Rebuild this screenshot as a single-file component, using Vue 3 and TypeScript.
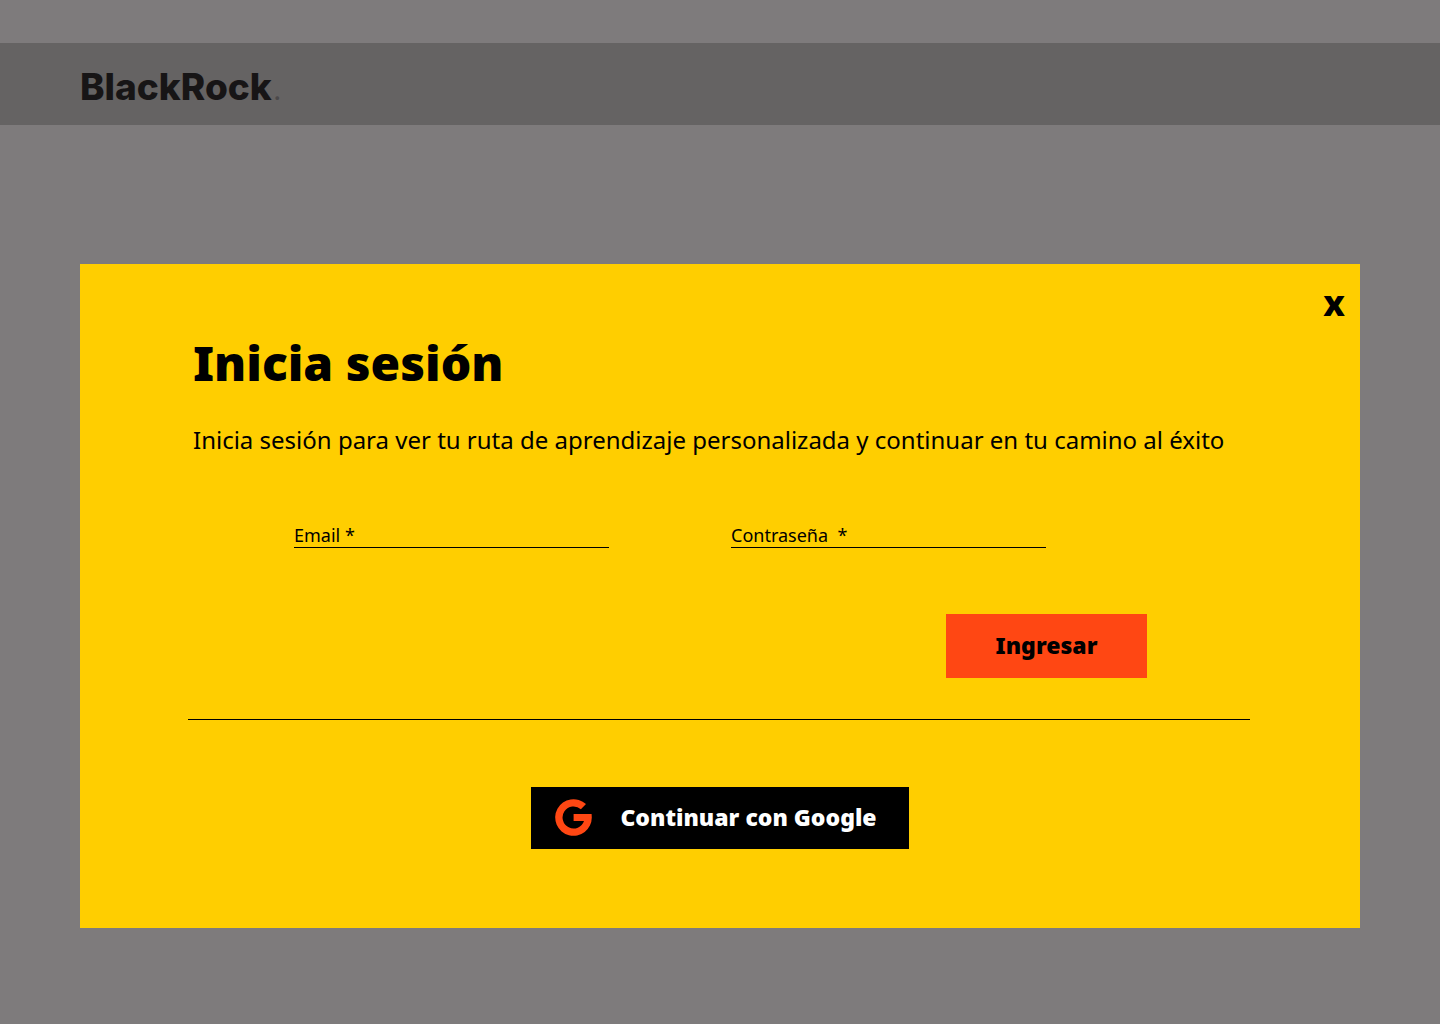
<script setup lang="ts">
import { ref } from 'vue'

const email = ref('')
const password = ref('')
const open = ref(true)
</script>

<template>
  <div class="page">
    <header class="topbar">
      <a class="logo" href="#">BlackRock<span class="mark">.</span></a>
    </header>

    <main v-if="open" class="dialog" role="dialog" aria-labelledby="title">
      <button class="close" type="button" @click="open = false">x</button>
      <div class="content">
        <h1 id="title">Inicia sesión</h1>
        <p class="intro">Inicia sesión para ver tu ruta de aprendizaje personalizada y continuar en tu camino al éxito</p>

        <form @submit.prevent>
          <div class="fields">
            <div class="field">
              <label for="email">Email *</label>
              <input id="email" v-model="email" type="email" />
            </div>
            <div class="field">
              <label for="password">Contraseña&nbsp; *</label>
              <input id="password" v-model="password" type="password" />
            </div>
          </div>
          <div class="actions">
            <button class="submit" type="submit">Ingresar</button>
          </div>
        </form>
      </div>

      <hr />

      <div class="alternatives">
        <button class="google" type="button">
          <svg viewBox="0 0 37 37" width="37" height="37" aria-hidden="true">
            <path
              fill="#ff4713"
              d="M31 5.1A18.3 18.3 0 1 0 36.8 18.5L36.6 15H18.6V22H29A11 11 0 1 1 25.9 10.3Z"
            />
          </svg>
          <span>Continuar con Google</span>
        </button>
      </div>
    </main>
  </div>
</template>

<style>
body {
  background: #7e7b7c;
}
</style>

<style scoped>
.page {
  padding: 43px 0 96px;
  color: #000;
  font-family: 'Noto Sans', sans-serif;
}

.topbar {
  display: flex;
  align-items: center;
  height: 82px;
  padding: 0 80px;
  background: #656363;
}

.logo {
  padding-top: 12px;
  color: #171516;
  font: 800 37px/48px Inter, sans-serif;
  text-decoration: none;
}

.mark {
  padding-left: 2px;
  color: #4b494a;
  font-size: 20px;
}

.dialog {
  display: flex;
  flex-direction: column;
  margin: 139px 80px 0;
  padding: 16px 0 79px;
  background: #ffce00;
}

button {
  padding: 0 0 2px;
  border: 0;
  font-family: inherit;
  font-weight: 900;
  cursor: pointer;
}

.close {
  align-self: flex-end;
  margin-right: 15px;
  padding: 0;
  background: none;
  font-size: 36px;
  font-weight: 800;
  line-height: 46px;
}

.content {
  padding: 0 113px;
}

h1 {
  margin: 0;
  font-size: 48px;
  font-weight: 900;
  line-height: 74px;
}

.intro {
  margin: 24px 0 0;
  font-size: 24px;
  line-height: 32px;
}

.fields {
  display: flex;
  gap: 122px;
  margin: 67px 100px 0 101px;
}

.field {
  display: flex;
  flex: 0 1 315px;
  min-width: 0;
  border-bottom: 1px solid #000;
  font-size: 18px;
  line-height: 24px;
}

.field label {
  flex: none;
}

.field input {
  flex: 1;
  min-width: 0;
  padding: 0 0 0 8px;
  border: 0;
  outline: 0;
  background: none;
  font: inherit;
}

.actions {
  display: flex;
  justify-content: flex-end;
  margin: 66px 100px 0 0;
}

.submit {
  width: 201px;
  height: 64px;
  background: #ff4713;
  font-size: 23px;
}

hr {
  width: auto;
  margin: 41px 110px 0 108px;
  border: 0;
  border-top: 1px solid #000;
}

.alternatives {
  display: flex;
  justify-content: center;
  margin-top: 67px;
}

.google {
  display: flex;
  align-items: center;
  gap: 28px;
  height: 62px;
  padding: 0 32px 2px 24px;
  background: #000;
  color: #fff;
  font-size: 23px;
}
</style>
